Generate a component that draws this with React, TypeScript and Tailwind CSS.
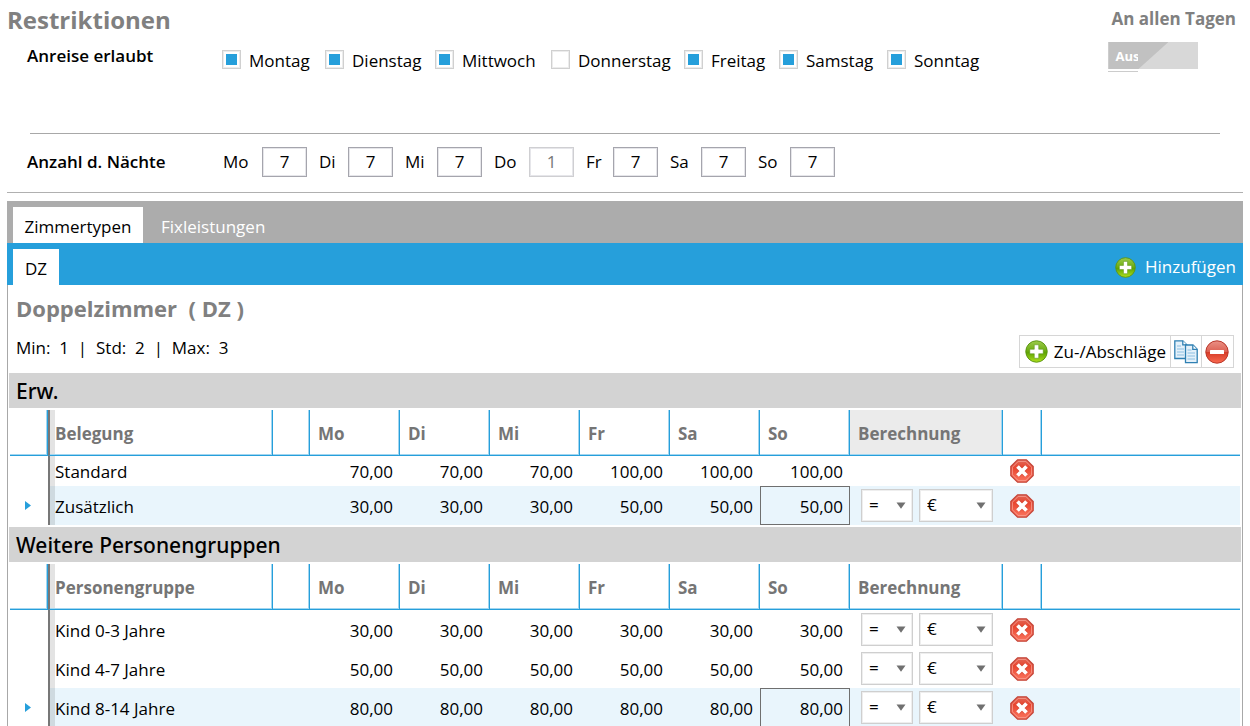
import { useState } from "react";

const arrivalDays = [
  { name: "Montag", on: true },
  { name: "Dienstag", on: true },
  { name: "Mittwoch", on: true },
  { name: "Donnerstag", on: false },
  { name: "Freitag", on: true },
  { name: "Samstag", on: true },
  { name: "Sonntag", on: true },
];

const nights = [
  { day: "Mo", value: "7" },
  { day: "Di", value: "7" },
  { day: "Mi", value: "7" },
  { day: "Do", value: "1", disabled: true },
  { day: "Fr", value: "7" },
  { day: "Sa", value: "7" },
  { day: "So", value: "7" },
];

const priceDays = ["Mo", "Di", "Mi", "Fr", "Sa", "So"];

type Row = { name: string; prices: string[]; calc: boolean; selected?: boolean; compact?: boolean };

const adultRows: Row[] = [
  { name: "Standard", prices: ["70,00", "70,00", "70,00", "100,00", "100,00", "100,00"], calc: false, compact: true },
  { name: "Zusätzlich", prices: ["30,00", "30,00", "30,00", "50,00", "50,00", "50,00"], calc: true, selected: true },
];

const childRows: Row[] = [
  { name: "Kind 0-3 Jahre", prices: ["30,00", "30,00", "30,00", "30,00", "30,00", "30,00"], calc: true },
  { name: "Kind 4-7 Jahre", prices: ["50,00", "50,00", "50,00", "50,00", "50,00", "50,00"], calc: true },
  { name: "Kind 8-14 Jahre", prices: ["80,00", "80,00", "80,00", "80,00", "80,00", "80,00"], calc: true, selected: true },
];

function PlusIcon({ className }: { className: string }) {
  return (
    <svg viewBox="0 0 24 24" className={className} aria-hidden="true">
      <defs>
        <linearGradient id="plusFill" x1="0" y1="0" x2="0" y2="1">
          <stop offset="0" stopColor="#9ccb4c" />
          <stop offset="0.45" stopColor="#6fae14" />
          <stop offset="0.55" stopColor="#5fa304" />
          <stop offset="1" stopColor="#aee01e" />
        </linearGradient>
      </defs>
      <circle cx="12" cy="12" r="11.2" fill="url(#plusFill)" stroke="#5a9412" strokeWidth="1" />
      <path d="M9.700 5h4.600v4.700H19v4.600h-4.700V19H9.700v-4.700H5V9.700h4.700Z" fill="#fff" stroke="#4f8a0c" strokeWidth="0.5" />
    </svg>
  );
}

function MinusIcon() {
  return (
    <svg viewBox="0 0 24 24" className="size-6" aria-hidden="true">
      <defs>
        <linearGradient id="minusFill" x1="0" y1="0" x2="0" y2="1">
          <stop offset="0" stopColor="#ea9186" />
          <stop offset="0.48" stopColor="#dd6254" />
          <stop offset="0.52" stopColor="#d63c28" />
          <stop offset="1" stopColor="#fa6a50" />
        </linearGradient>
      </defs>
      <circle cx="12" cy="12" r="11.2" fill="url(#minusFill)" stroke="#b9382b" strokeWidth="1" />
      <rect x="5" y="10" width="14" height="4" rx="0.5" fill="#fff" />
    </svg>
  );
}

function CopyIcon() {
  return (
    <svg viewBox="0 0 24 24" className="size-6" fill="#e4f1fa" stroke="#2f80b3" strokeWidth="1.3" aria-hidden="true">
      <path d="M0.8 0.8h8l4 4v13.7h-12Z" />
      <path d="M8.8 0.8v4h4" fill="#fff" />
      <path d="M3 6h4M3 9h7M3 12h7M3 15h7" stroke="#a9d0ea" />
      <path d="M11.5 5h7.5l4.2 4.2v13.5H11.5Z" />
      <path d="M18.8 5v4.4h4.400" fill="#fff" />
      <path d="M13.5 10h4M13.5 13h7.5M13.5 16h7.5M13.5 19h7.5" stroke="#a9d0ea" />
    </svg>
  );
}

function DeleteIcon() {
  return (
    <svg viewBox="0 0 24 24" className="size-6" aria-hidden="true">
      <defs>
        <linearGradient id="deleteFill" x1="0" y1="0" x2="0" y2="1">
          <stop offset="0" stopColor="#e06a5a" />
          <stop offset="0.35" stopColor="#e8452f" />
          <stop offset="1" stopColor="#fb7660" />
        </linearGradient>
      </defs>
      <path d="M7.5 0.8h9l6.7 6.7v9l-6.7 6.7h-9L0.8 16.500v-9Z" fill="url(#deleteFill)" stroke="#c4473b" strokeWidth="1.2" strokeLinejoin="round" />
      <path d="M8.2 2.400h7.600l5.800 5.800v7.600l-5.800 5.800H8.200l-5.800-5.800V8.200Z" fill="none" stroke="#f7a396" strokeWidth="1" opacity="0.8" />
      <path d="M8 8l8 8M16 8l-8 8" stroke="#b93424" strokeWidth="5.2" opacity="0.4" />
      <path d="M7.5 7.5l9 9M16.500 7.500l-9 9" stroke="#fff" strokeWidth="3.8" />
    </svg>
  );
}

function Dropdown({ label, value, options, className }: { label: string; value: string; options: string[]; className: string }) {
  return (
    <div className={"relative " + className}>
      <select
        aria-label={label}
        defaultValue={value}
        className="block h-[33px] w-full appearance-none border border-[#cfcfcf] bg-white pb-px pl-[7px] text-[17px] leading-6 text-black shadow-[inset_0_0_0_1px_#eeeeee]"
      >
        {options.map((o) => (
          <option key={o}>{o}</option>
        ))}
      </select>
      <svg viewBox="0 0 10 7" className="pointer-events-none absolute top-[13px] right-[7px] h-[7px] w-[10px]" aria-hidden="true">
        <path d="M0.5 0.5h9L5 6.8Z" fill="#707070" />
      </svg>
    </div>
  );
}

const headCell =
  "h-[46px] border-r border-b border-r-[#269fdb] border-b-[#269fdb] pt-[2px] pl-2 text-left font-bold text-[#757575] shadow-[inset_-1px_-1px_0_#a3d6f0]";

function PriceTable({ caption, rows, shadedCalc }: { caption: string; rows: Row[]; shadedCalc?: boolean }) {
  return (
    <table className="w-full table-fixed border-separate border-spacing-0 text-[17px] leading-6">
      <colgroup>
        <col className="w-[38px]" />
        <col className="w-[225px]" />
        <col className="w-[37px]" />
        {priceDays.map((d) => (
          <col key={d} className="w-[90px]" />
        ))}
        <col className="w-[153px]" />
        <col className="w-[39px]" />
        <col />
      </colgroup>
      <thead>
        <tr>
          <th className={headCell} />
          <th className="h-[46px] border-r border-b border-l-2 border-r-[#269fdb] border-b-[#269fdb] border-l-[#777777] pt-[2px] pl-[5px] text-left font-bold text-[#757575] shadow-[inset_-1px_-1px_0_#a3d6f0,inset_5px_0_0_#e3e3e3]">
            {caption}
          </th>
          <th className={headCell} />
          {priceDays.map((d) => (
            <th key={d} className={headCell}>
              {d}
            </th>
          ))}
          <th className={headCell + (shadedCalc ? " bg-[#ebebeb]" : "")}>Berechnung</th>
          <th className={headCell} />
          <th className="border-b border-b-[#269fdb] shadow-[inset_0_-1px_0_#a3d6f0]" />
        </tr>
      </thead>
      <tbody>
        {rows.map((row) => {
          const tint = row.selected ? " bg-[#e9f5fc]" : "";
          return (
            <tr key={row.name}>
              <td className={(row.compact ? "h-[30px]" : "h-[39px]") + " p-0"}>
                {row.selected && (
                  <svg viewBox="0 0 6 9" className="ml-[15px] h-[9px] w-[6px]" aria-hidden="true">
                    <path d="M0 0l6 4.5L0 9Z" fill="#269fdb" />
                  </svg>
                )}
              </td>
              <td className={"border-l-2 border-[#777777] pt-[2px] pl-[5px] shadow-[inset_5px_0_0_rgba(0,0,0,0.11)]" + tint}>
                {row.name}
              </td>
              <td className={"p-0" + tint} />
              {row.prices.map((p, i) => (
                <td
                  key={i}
                  className={
                    (row.selected && i === 5 ? "border border-[#6f6f6f] pt-[2px] pr-[6px]" : "pt-[2px] pr-[7px]") +
                    " text-right" +
                    tint
                  }
                >
                  {p}
                </td>
              ))}
              <td className={"p-0" + tint}>
                {row.calc && (
                  <div className="flex gap-[6px] pl-[11px]">
                    <Dropdown label={row.name + " Operator"} value="=" options={["=", "+", "-"]} className="w-[52px]" />
                    <Dropdown label={row.name + " Einheit"} value="€" options={["€", "%"]} className="w-[74px]" />
                  </div>
                )}
              </td>
              <td className={"p-0" + tint}>
                <button type="button" aria-label={row.name + " löschen"} className="ml-[7px] block">
                  <DeleteIcon />
                </button>
              </td>
              <td className={"p-0" + tint} />
            </tr>
          );
        })}
      </tbody>
    </table>
  );
}

export default function App() {
  const [allDays, setAllDays] = useState(false);
  return (
    <main className="h-screen overflow-hidden bg-white px-[7px] font-['Open_Sans','Noto_Sans',sans-serif] text-[17px] leading-6 text-black">
      <section className="border-b border-[#b0b0b0]">
        <div className="flex h-[133px] items-start justify-between">
          <div>
            <h1 className="pt-1 text-[24px] leading-8 font-bold text-[#808080]">Restriktionen</h1>
            <div className="flex pl-5">
              <h2 className="w-[195px] pt-2 font-semibold">Anreise erlaubt</h2>
              <div className="grid grid-cols-[103px_110px_116px_133px_95px_108px_100px] pt-[13px]">
                {arrivalDays.map((d) => (
                  <label key={d.name} className="flex gap-2">
                    <input
                      type="checkbox"
                      defaultChecked={d.on}
                      className="mt-px size-[19px] shrink-0 appearance-none border border-[#d0d0d0] bg-clip-content p-[3px] shadow-[inset_0_0_0_1px_#ececec] checked:bg-[#269fdb]"
                    />
                    {d.name}
                  </label>
                ))}
              </div>
            </div>
          </div>
          <div className="pt-[7px] pr-[7px]">
            <div id="all-days" className="pl-[3px] font-bold text-[#808080]">
              An allen Tagen
            </div>
            <button
              type="button"
              role="switch"
              aria-checked={allDays}
              aria-labelledby="all-days"
              onClick={() => setAllDays(!allDays)}
              className="mt-[11px] block text-left"
            >
              <span className="block h-[27px] w-[90px] bg-[#d8d8d8]">
                <span className="block h-full w-[60px] bg-[#c1c1c1] [clip-path:polygon(0_0,100%_0,50%_100%,0_100%)]">
                  <span className="block w-[30px] overflow-hidden pl-[7px] text-[13px] leading-7 font-bold text-white">
                    {allDays ? "Ein" : "Aus"}
                  </span>
                </span>
              </span>
              <span className="mt-[2px] block h-px w-[30px] bg-[#cccccc]" />
            </button>
          </div>
        </div>
        <hr className="mr-[23px] ml-[23px] border-[#a8a8a8]" />
        <div className="flex h-[58px] items-center pb-[3px] pl-5">
          <h2 className="w-[196px] font-semibold">Anzahl d. Nächte</h2>
          <div className="grid grid-cols-[84px_74px_77px_80px_72px_76px_77px] gap-3">
            {nights.map((n) => (
              <label key={n.day} className="flex items-center justify-between">
                {n.day}
                <input
                  type="text"
                  defaultValue={n.value}
                  disabled={n.disabled}
                  className="h-[30px] w-[45px] border border-[#a5a5ad] bg-white text-center shadow-[inset_0_0_0_1px_#e6e6ea] disabled:border-[#cfcfd2] disabled:text-[#777777]"
                />
              </label>
            ))}
          </div>
        </div>
      </section>

      <section className="pt-2">
        <nav className="flex h-[42px] items-stretch bg-[#acacac] pt-[6px] pl-[6px]">
          <button type="button" className="w-[130px] bg-white pt-1">
            Zimmertypen
          </button>
          <button type="button" className="px-[18px] pt-1 text-white">
            Fixleistungen
          </button>
        </nav>
        <nav className="flex h-[42px] items-stretch justify-between bg-[#269fdb] pl-[6px]">
          <button type="button" className="mt-[6px] w-[46px] bg-white pt-1">
            DZ
          </button>
          <button type="button" className="flex items-center gap-[9px] pt-[6px] pr-[7px] text-white">
            <PlusIcon className="size-[21px]" />
            Hinzufügen
          </button>
        </nav>
        <div className="border-x border-[#a8a8a8] px-px">
          <header className="flex h-[88px] items-end justify-between pr-[7px] pl-[7px]">
            <div className="self-start">
              <h2 className="pt-[7px] text-[22px] leading-8 font-bold whitespace-pre text-[#808080]">Doppelzimmer  ( DZ )</h2>
              <p className="pt-3 whitespace-pre">Min:  1  |  Std:  2  |  Max:  3</p>
            </div>
            <div className="mb-[5px] flex h-[33px] divide-x divide-[#d6d6d6] border border-[#d6d6d6]">
              <button type="button" className="flex items-center gap-[5px] pr-1 pl-[5px]">
                <PlusIcon className="size-[23px]" />
                <span className="pl-px">Zu-/Abschläge</span>
              </button>
              <button type="button" aria-label="Kopieren" className="px-[3px]">
                <CopyIcon />
              </button>
              <button type="button" aria-label="Entfernen" className="pr-1 pl-[3px]">
                <MinusIcon />
              </button>
            </div>
          </header>
          <h3 className="h-[35px] bg-[#d3d3d3] pl-[7px] font-['Noto_Sans','Open_Sans',sans-serif] text-[21px] leading-9 font-medium">Erw.</h3>
          <div className="px-px py-[2px]">
            <PriceTable caption="Belegung" rows={adultRows} shadedCalc />
          </div>
          <h3 className="h-[35px] bg-[#d3d3d3] pl-[7px] font-['Noto_Sans','Open_Sans',sans-serif] text-[21px] leading-9 font-medium">Weitere Personengruppen</h3>
          <div className="px-px py-[2px]">
            <PriceTable caption="Personengruppe" rows={childRows} />
          </div>
        </div>
      </section>
    </main>
  );
}
